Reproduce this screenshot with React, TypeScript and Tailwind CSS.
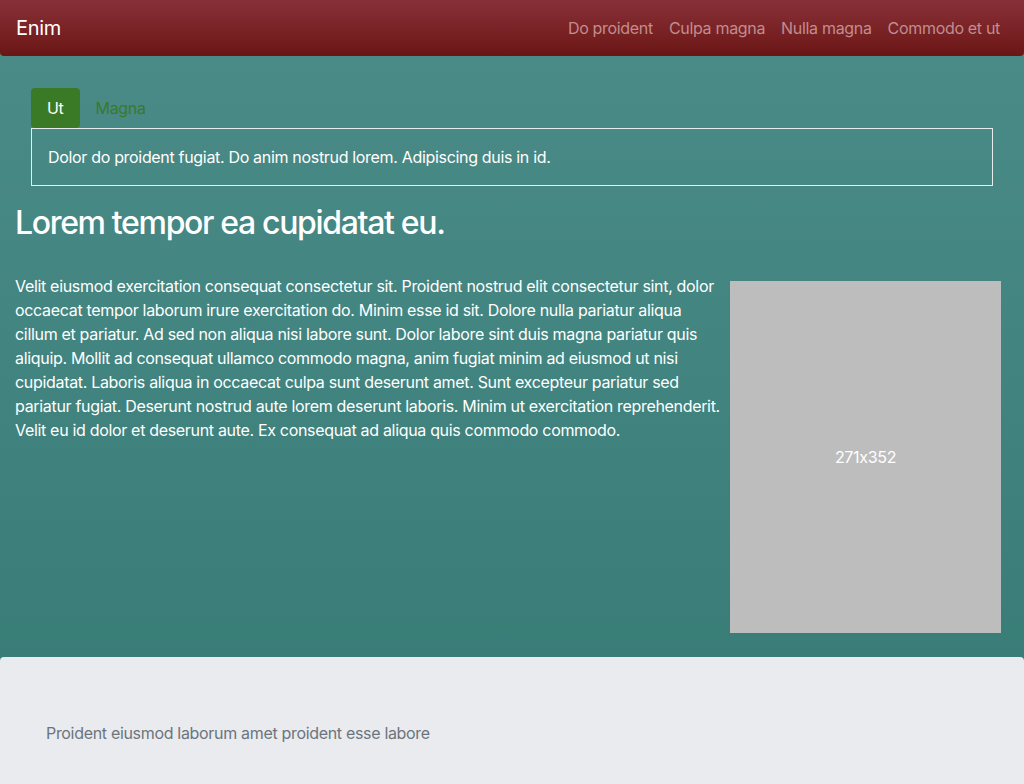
import React from 'react';

const navLinks = ['Do proident', 'Culpa magna', 'Nulla magna', 'Commodo et ut'];

const bodyText =
  'Velit eiusmod exercitation consequat consectetur sit. Proident nostrud elit consectetur sint, dolor occaecat tempor laborum irure exercitation do. Minim esse id sit. Dolore nulla pariatur aliqua cillum et pariatur. Ad sed non aliqua nisi labore sunt. Dolor labore sint duis magna pariatur quis aliquip. Mollit ad consequat ullamco commodo magna, anim fugiat minim ad eiusmod ut nisi cupidatat. Laboris aliqua in occaecat culpa sunt deserunt amet. Sunt excepteur pariatur sed pariatur fugiat. Deserunt nostrud aute lorem deserunt laboris. Minim ut exercitation reprehenderit. Velit eu id dolor et deserunt aute. Ex consequat ad aliqua quis commodo commodo.';

export default function App() {
  const [tab, setTab] = React.useState(0);

  return (
    <div className="min-h-screen bg-gradient-to-b from-[#4b8c89] to-[#367a74] font-['Inter','Liberation_Sans',sans-serif] text-base tracking-[-0.02em] text-white [font-feature-settings:'calt'_0]">
      {/* Navbar */}
      <nav className="flex h-14 items-center justify-between rounded-b bg-gradient-to-b from-[#883038] to-[#6b1615] pl-4 pr-4">
        <a className="text-xl leading-none text-white">Enim</a>
        <ul className="flex">
          {navLinks.map((link) => (
            <li key={link}>
              <a className="px-2 text-[#c18d8f]">{link}</a>
            </li>
          ))}
        </ul>
      </nav>

      <main className="px-[15px] pb-6">
        {/* Tabs */}
        <div className="mx-4 mt-8">
          <div className="flex">
            <button
              onClick={() => setTab(0)}
              className={tab === 0 ? 'h-10 rounded bg-[#3a7a26] px-4 text-white' : 'h-10 rounded px-4 text-[#3a7a26]'}
            >
              Ut
            </button>
            <button
              onClick={() => setTab(1)}
              className={tab === 1 ? 'h-10 rounded bg-[#3a7a26] px-4 text-white' : 'h-10 rounded px-4 text-[#3a7a26]'}
            >
              Magna
            </button>
          </div>
          <div className="border border-[#e6ecec] px-4 py-4 leading-6">
            {tab === 0
              ? 'Dolor do proident fugiat. Do anim nostrud lorem. Adipiscing duis in id.'
              : 'Magna lorem ipsum dolor sit amet.'}
          </div>
        </div>

        <h2 className="mt-[18px] text-[32px] leading-[1.2] font-medium tracking-[-0.042em]">Lorem tempor ea cupidatat eu.</h2>

        {/* Content row */}
        <div className="mt-8 flex items-start">
          <p className="flex-1 leading-6">{bodyText}</p>
          <div className="mx-2 mt-[7px] flex h-[352px] w-[271px] shrink-0 items-center justify-center bg-[#bdbdbd] text-white">
            271x352
          </div>
        </div>
      </main>

      {/* Footer */}
      <footer className="rounded-t bg-[#e9ebee] px-[46px] py-16 leading-6 text-[#6c757d]">
        Proident eiusmod laborum amet proident esse labore
      </footer>
    </div>
  );
}
